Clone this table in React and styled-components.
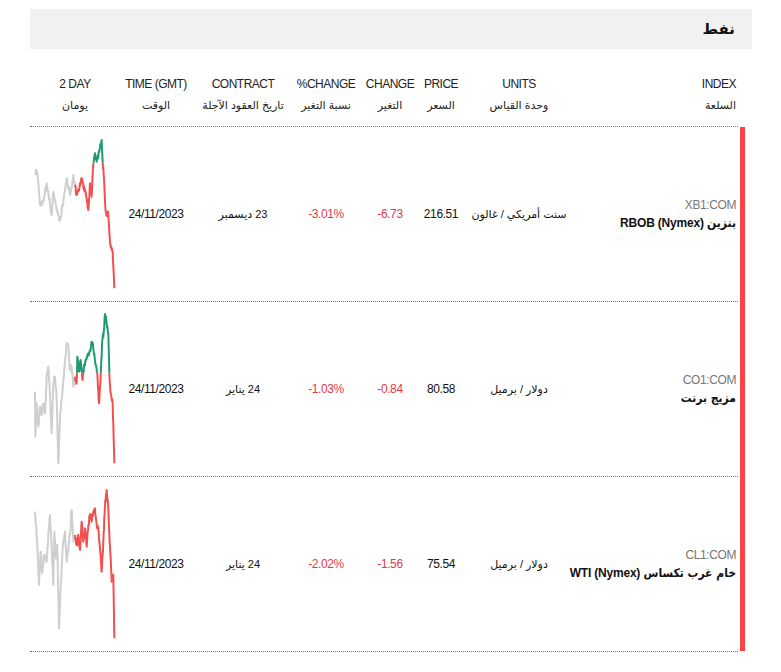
import React from "react";
import styled, { createGlobalStyle } from "styled-components";

const Global = createGlobalStyle`
  body { margin: 0; background: #fff; font-family: "Liberation Sans", "DejaVu Sans", sans-serif; color: #111; }
`;

const Page = styled.div`
  padding: 9px 0 0 30px;
  width: 722px;
`;

const TitleBar = styled.div`
  background: #f1f1f1;
  height: 40px;
  display: flex;
  align-items: center;
  justify-content: flex-end;
  padding-right: 17px;
  box-sizing: border-box;
`;

const Title = styled.h2`
  margin: 0;
  font-size: 15px;
  font-weight: 700;
  direction: rtl;
  font-family: "DejaVu Sans", sans-serif;
`;

const COLS = "160px 118px 38px 64px 64px 102px 72px 90px";

const HeaderRow = styled.div`
  width: 708px;
  display: grid;
  grid-template-columns: ${COLS};
  direction: rtl;
  padding: 26px 0 12px;
  border-bottom: 1px dotted #777;
`;

const HeadCell = styled.div`
  display: flex;
  flex-direction: column;
  gap: 3px;
  align-items: ${(p) => (p.$start ? "flex-start" : "center")};
  padding-right: ${(p) => (p.$start ? "2px" : "0")};
  white-space: nowrap;
`;

const HeadEn = styled.span`
  direction: ltr;
  font-size: 12px;
  line-height: 18px;
  letter-spacing: -0.5px;
  color: #222;
`;

const HeadAr = styled.span`
  direction: rtl;
  font-size: 11px;
  line-height: 18px;
  color: #222;
`;

const Body = styled.div`
  display: flex;
  gap: 2px;
  width: 715px;
`;

const Rows = styled.div`
  width: 708px;
  display: flex;
  flex-direction: column;
`;

const Bar = styled.div`
  width: 5px;
  background: #fd4343;
  margin-bottom: 1px;
`;

const Row = styled.div`
  display: grid;
  grid-template-columns: ${COLS};
  direction: rtl;
  height: 174px;
  border-bottom: 1px dotted #777;
  align-items: center;
`;

const IndexCell = styled.div`
  display: flex;
  flex-direction: column;
  align-items: flex-start;
  gap: 4px;
  padding-right: 2px;
`;

const Code = styled.span`
  direction: ltr;
  font-size: 12px;
  letter-spacing: -0.4px;
  color: #777;
`;

const Name = styled.span`
  direction: rtl;
  font-size: 12px;
  font-weight: 700;
  letter-spacing: -0.2px;
  white-space: nowrap;
`;

const NameAr = styled.span`
  font-family: "DejaVu Sans Condensed", "DejaVu Sans", sans-serif;
  font-stretch: condensed;
  letter-spacing: 0;
`;

const Cell = styled.div`
  text-align: center;
  white-space: nowrap;
  direction: ${(p) => (p.$ar ? "rtl" : "ltr")};
  font-size: ${(p) => (p.$ar ? "11px" : "12px")};
  letter-spacing: ${(p) => (p.$ar ? "0" : "-0.4px")};
  color: ${(p) => (p.$neg ? "#e23a46" : "#111")};
`;

const ChartCell = styled.div`
  display: flex;
  justify-content: center;
  align-items: center;
`;

function rng(seed) {
  let a = seed;
  return () => {
    a |= 0;
    a = (a + 0x6d2b79f5) | 0;
    let t = Math.imul(a ^ (a >>> 15), 1 | a);
    t = (t + Math.imul(t ^ (t >>> 7), 61 | t)) ^ t;
    return ((t ^ (t >>> 14)) >>> 0) / 4294967296;
  };
}

function jitter(pts, seed) {
  const r = rng(seed);
  const out = [];
  for (let i = 0; i < pts.length - 1; i++) {
    const [x0, y0] = pts[i];
    const [x1, y1] = pts[i + 1];
    const n = Math.max(1, Math.round(Math.abs(x1 - x0) / 1.1));
    for (let k = 0; k < n; k++) {
      const t = k / n;
      const j = k === 0 ? 0 : (r() - 0.5) * 18;
      out.push([x0 + (x1 - x0) * t, y0 + (y1 - y0) * t + j]);
    }
  }
  out.push(pts[pts.length - 1]);
  return out.map((p) => p.map((v) => v.toFixed(1)).join(",")).join(" ");
}

const CHARTS = [
  {
    base: 113,
    grey: [[45,145],[52,142],[60,240],[70,228],[80,175],[90,240],[95,270],[100,200],[110,250],[120,285],[130,230],[140,160],[150,210],[160,150],[165,185]],
    color: [[165,185],[170,210],[178,190],[185,160],[195,200],[200,220],[205,255],[210,175],[215,215],[220,115],[225,85],[230,110],[240,70],[245,45],[248,110],[252,160],[257,260],[265,270],[270,350],[278,380],[283,490]],
  },
  {
    base: 218,
    grey: [[45,275],[46,410],[50,310],[55,380],[60,320],[65,345],[70,310],[75,340],[80,230],[85,200],[90,290],[95,400],[100,250],[105,230],[110,300],[115,490],[120,350],[125,300],[130,240],[135,180],[140,130],[145,140],[150,210],[155,200],[160,260],[165,230]],
    color: [[165,230],[170,250],[172,170],[178,215],[182,180],[188,240],[192,195],[198,180],[205,160],[210,150],[215,125],[220,145],[225,180],[232,220],[237,310],[242,230],[247,120],[252,90],[255,42],[260,70],[265,100],[268,220],[272,280],[278,310],[283,490]],
  },
  {
    base: 0,
    grey: [[45,110],[48,150],[52,215],[57,330],[62,230],[67,295],[72,240],[80,260],[85,180],[90,120],[95,220],[100,330],[103,170],[108,250],[112,210],[117,460],[122,340],[127,240],[130,200],[135,170],[140,260],[145,220],[150,180],[155,105],[160,200],[165,180]],
    color: [[165,180],[170,210],[175,180],[180,225],[185,140],[190,200],[195,160],[200,215],[205,150],[210,120],[215,140],[220,110],[225,100],[230,150],[235,160],[240,220],[245,290],[250,200],[255,90],[260,45],[265,100],[268,180],[272,250],[275,320],[280,300],[283,490]],
  },
];

function Spark({ idx }) {
  const c = CHARTS[idx];
  const g = jitter(c.grey, idx * 17 + 3);
  const col = jitter(c.color, idx * 31 + 7);
  const id = `c${idx}`;
  return (
    <svg width="84" height="152" viewBox="39 39 252 456" preserveAspectRatio="none">
      <defs>
        <clipPath id={`${id}u`}><rect x="0" y="0" width="400" height={c.base} /></clipPath>
        <clipPath id={`${id}d`}><rect x="0" y={c.base} width="400" height="600" /></clipPath>
      </defs>
      <polyline points={g} fill="none" stroke="#cfcfcf" strokeWidth="6" strokeLinejoin="round" />
      <polyline points={col} fill="none" stroke="#1f9a6e" strokeWidth="6" strokeLinejoin="round" clipPath={`url(#${id}u)`} />
      <polyline points={col} fill="none" stroke="#f24f4f" strokeWidth="6" strokeLinejoin="round" clipPath={`url(#${id}d)`} />
    </svg>
  );
}

const HEAD = [
  { en: "INDEX", ar: "السلعة", start: true },
  { en: "UNITS", ar: "وحدة القياس" },
  { en: "PRICE", ar: "السعر" },
  { en: "CHANGE", ar: "التغير" },
  { en: "%CHANGE", ar: "نسبة التغير" },
  { en: "CONTRACT", ar: "تاريخ العقود الآجلة" },
  { en: "TIME (GMT)", ar: "الوقت" },
  { en: "2 DAY", ar: "يومان" },
];

const DATA = [
  { code: "XB1:COM", ar: "بنزين", en: "RBOB (Nymex)", units: "سنت أمريكي / غالون", price: "216.51", change: "-6.73", pct: "-3.01%", contract: "23 ديسمبر", time: "24/11/2023" },
  { code: "CO1:COM", ar: "مزيج برنت", en: "", units: "دولار / برميل", price: "80.58", change: "-0.84", pct: "-1.03%", contract: "24 يناير", time: "24/11/2023" },
  { code: "CL1:COM", ar: "خام غرب تكساس", en: "WTI (Nymex)", units: "دولار / برميل", price: "75.54", change: "-1.56", pct: "-2.02%", contract: "24 يناير", time: "24/11/2023" },
];

export default function App() {
  return (
    <Page>
      <Global />
      <TitleBar>
        <Title>نفط</Title>
      </TitleBar>
      <HeaderRow>
        {HEAD.map((h) => (
          <HeadCell key={h.en} $start={h.start}>
            <HeadEn>{h.en}</HeadEn>
            <HeadAr>{h.ar}</HeadAr>
          </HeadCell>
        ))}
      </HeaderRow>
      <Body>
        <Rows>
          {DATA.map((d, i) => (
            <Row key={d.code}>
              <IndexCell>
                <Code>{d.code}</Code>
                <Name>
                  <NameAr>{d.ar}</NameAr>
                  {d.en ? ` ${d.en}` : ""}
                </Name>
              </IndexCell>
              <Cell $ar>{d.units}</Cell>
              <Cell>{d.price}</Cell>
              <Cell $neg>{d.change}</Cell>
              <Cell $neg>{d.pct}</Cell>
              <Cell $ar>{d.contract}</Cell>
              <Cell>{d.time}</Cell>
              <ChartCell>
                <Spark idx={i} />
              </ChartCell>
            </Row>
          ))}
        </Rows>
        <Bar />
      </Body>
    </Page>
  );
}
